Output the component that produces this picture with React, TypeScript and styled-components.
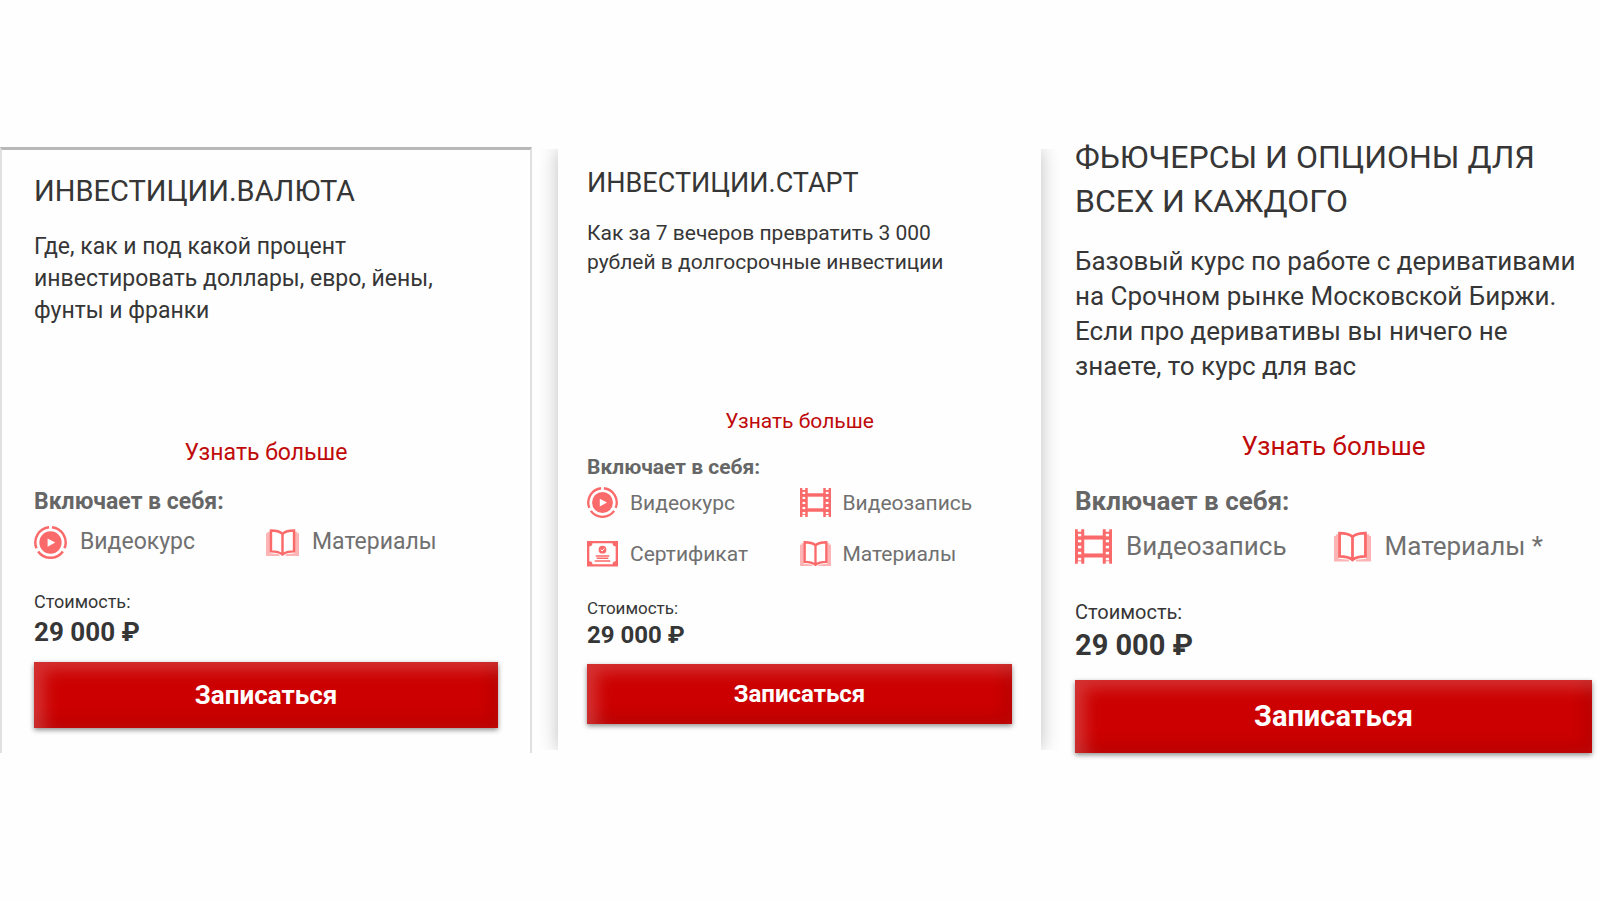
import React from 'react';
import styled, { createGlobalStyle, css, ThemeProvider } from 'styled-components';

type TextStyle = { size: number; line: number; top: number };

interface CardScale {
  title: TextStyle;
  text: TextStyle & { height: number };
  more: TextStyle;
  heading: TextStyle;
  items: TextStyle & { icon: number; gap: number; rowGap: number };
  label: TextStyle;
  price: TextStyle;
  button: TextStyle;
}

const medium: CardScale = {
  title: { size: 29, line: 40, top: 21 },
  text: { size: 23, line: 32, top: 20, height: 206 },
  more: { size: 23, line: 32, top: 0 },
  heading: { size: 23, line: 32, top: 17 },
  items: { size: 23, line: 34, top: 7, icon: 33, gap: 13, rowGap: 22 },
  label: { size: 18, line: 24, top: 31 },
  price: { size: 26, line: 32, top: 2 },
  button: { size: 26, line: 66, top: 14 },
};

const small: CardScale = {
  title: { size: 27, line: 36, top: 16 },
  text: { size: 21, line: 29, top: 18, height: 188 },
  more: { size: 21, line: 28, top: 0 },
  heading: { size: 21, line: 28, top: 18 },
  items: { size: 21, line: 30, top: 6, icon: 31, gap: 12, rowGap: 20 },
  label: { size: 17, line: 22, top: 28 },
  price: { size: 24, line: 28, top: 2 },
  button: { size: 24, line: 60, top: 15 },
};

const large: CardScale = {
  title: { size: 32, line: 44, top: 0 },
  text: { size: 26, line: 35, top: 21, height: 184 },
  more: { size: 26, line: 36, top: 0 },
  heading: { size: 26, line: 36, top: 19 },
  items: { size: 26, line: 38, top: 8, icon: 37, gap: 14, rowGap: 24 },
  label: { size: 20, line: 26, top: 34 },
  price: { size: 29, line: 36, top: 2 },
  button: { size: 29, line: 73, top: 17 },
};

const type = (key: keyof CardScale) => css`
  margin: ${({ theme }) => (theme as CardScale)[key].top}px 0 0;
  font-size: ${({ theme }) => (theme as CardScale)[key].size}px;
  line-height: ${({ theme }) => (theme as CardScale)[key].line}px;
`;

const GlobalStyle = createGlobalStyle`
  *, *::before, *::after { box-sizing: border-box; }
  body {
    margin: 0;
    background: #fefefe;
    color: #363636;
    font-family: Roboto, "Liberation Sans", sans-serif;
  }
`;

const Page = styled.main`
  display: grid;
  grid-template-columns: 558fr 483fr 559fr;
  align-items: start;
  min-height: 100vh;
  padding-top: 135px;
`;

const Card = styled.article<{ $frame: 'outlined' | 'raised' | 'plain' }>`
  display: flex;
  flex-direction: column;

  ${({ $frame }) =>
    $frame === 'outlined' &&
    css`
      margin: 12px 26px 0 0;
      padding: 0 32px 25px;
      border: 2px solid #e0e0e0;
      border-top: 3px solid #b8b8b8;
      border-bottom: 0;
    `}

  ${({ $frame }) =>
    $frame === 'raised' &&
    css`
      margin-top: 14px;
      padding: 0 29px 26px;
      box-shadow: 0 0 18px rgba(0, 0, 0, 0.25);
      clip-path: inset(0 -18px);
    `}

  ${({ $frame }) =>
    $frame === 'plain' &&
    css`
      padding: 0 8px 26px 34px;
    `}
`;

const Title = styled.h2`
  ${type('title')}
  font-weight: 400;
  text-transform: uppercase;
`;

const Description = styled.p`
  ${type('text')}
  min-height: ${({ theme }) => (theme as CardScale).text.height}px;
`;

const MoreLink = styled.a`
  ${type('more')}
  align-self: center;
  color: #c00a0a;
  text-decoration: none;
`;

const Heading = styled.h3`
  ${type('heading')}
  color: #666;
  font-weight: 700;
`;

const Features = styled.ul`
  ${type('items')}
  display: grid;
  grid-template-columns: 1fr 1fr;
  row-gap: ${({ theme }) => (theme as CardScale).items.rowGap}px;
  padding: 0;
  color: #707070;
  list-style: none;
`;

const Feature = styled.li`
  display: flex;
  align-items: center;
  gap: ${({ theme }) => (theme as CardScale).items.gap}px;
  white-space: nowrap;
`;

const Icon = styled.svg`
  flex: none;
  width: ${({ theme }) => (theme as CardScale).items.icon}px;
  height: ${({ theme }) => (theme as CardScale).items.icon}px;
  color: #fb6a6a;
`;

const PriceLabel = styled.p`
  ${type('label')}
`;

const Price = styled.p`
  ${type('price')}
  font-weight: 700;
`;

const EnrollButton = styled.button`
  ${type('button')}
  padding: 0;
  border: 0;
  background: #cc0000;
  box-shadow:
    inset 10px 8px 16px rgba(255, 255, 255, 0.2),
    inset -8px -8px 16px rgba(0, 0, 0, 0.09),
    0 2px 5px rgba(0, 0, 0, 0.45);
  color: #fff;
  font-family: inherit;
  font-weight: 700;
  cursor: pointer;
`;

const VideoCourseIcon = () => (
  <Icon viewBox="0 0 32 32" aria-hidden="true">
    <g fill="none" stroke="currentColor" strokeWidth="2.400">
      <path d="M17.400 1.300A14.800 14.800 0 0 1 29.600 21.600" />
      <path d="M14.600 1.300A14.800 14.800 0 0 0 2.400 21.600" />
      <path d="M4 24.700A14.800 14.800 0 0 0 28 24.700" />
    </g>
    <path
      fill="currentColor"
      fillRule="evenodd"
      d="M16 5.200a10.800 10.800 0 1 0 0 21.600a10.800 10.800 0 1 0 0-21.600zM13.200 12L20.600 16l-7.400 4z"
    />
  </Icon>
);

const FILM_HOLES = [5, 10.2, 15.4, 20.6, 25.8];

const VideoRecordIcon = () => (
  <Icon viewBox="0 0 32 32" aria-hidden="true">
    <path
      fill="currentColor"
      d="M0 1h2.400v2.200h3V1h2.600v5.500h16V1h2.600v2.200h3V1H32v30h-2.400v-2.200h-3V31H24v-5.500H8V31H5.400v-2.200h-3V31H0z"
    />
    <path fill="#fefefe" d="M8 10h16v12H8z" />
    {FILM_HOLES.map((y) => (
      <g key={y} fill="#fefefe">
        <rect x="2.600" y={y} width="2.800" height="2.200" />
        <rect x="26.600" y={y} width="2.800" height="2.200" />
      </g>
    ))}
  </Icon>
);

const CertificateIcon = () => (
  <Icon viewBox="0 0 32 32" aria-hidden="true">
    <path
      fill="currentColor"
      fillRule="evenodd"
      d="M0 3h32v26.500H0zM5.600 5.400A3.200 3.200 0 0 1 2.400 8.600v15.300A3.200 3.200 0 0 1 5.600 27.100h20.800A3.200 3.200 0 0 1 29.600 23.900V8.600A3.200 3.200 0 0 1 26.400 5.400z"
    />
    <circle cx="16" cy="12" r="4" fill="currentColor" />
    <path d="M14.200 12l1.400 1.400 2.400-2.600" fill="none" stroke="#fefefe" />
    <path d="M9 18.500h14M10 21h12M8 23.700h16" stroke="currentColor" strokeWidth="1.500" />
  </Icon>
);

const MaterialsIcon = () => (
  <Icon viewBox="0 0 32 32" aria-hidden="true">
    <path
      fill="currentColor"
      fillOpacity="0.5"
      d="M0 7h1.600V5.500H4V26.500l9 1V29H0zM32 7h-1.600V5.500H28V26.500l-9 1V29H32z"
    />
    <path
      fill="none"
      stroke="currentColor"
      strokeWidth="2.400"
      d="M16 7.500C13 5 9 4.400 4.800 4.400v20.200c4.200 0 8.200.6 11.200 3c3-2.400 7-3 11.200-3V4.400C23 4.400 19 5 16 7.500zV28"
    />
  </Icon>
);

const FEATURES = {
  course: { label: 'Видеокурс', Glyph: VideoCourseIcon },
  record: { label: 'Видеозапись', Glyph: VideoRecordIcon },
  certificate: { label: 'Сертификат', Glyph: CertificateIcon },
  materials: { label: 'Материалы', Glyph: MaterialsIcon },
  materialsNote: { label: 'Материалы *', Glyph: MaterialsIcon },
};

interface Course {
  title: string;
  lines: string[];
  features: (keyof typeof FEATURES)[];
  frame: 'outlined' | 'raised' | 'plain';
  scale: CardScale;
}

const COURSES: Course[] = [
  {
    title: 'Инвестиции.Валюта',
    lines: ['Где, как и под какой процент', 'инвестировать доллары, евро, йены,', 'фунты и франки'],
    features: ['course', 'materials'],
    frame: 'outlined',
    scale: medium,
  },
  {
    title: 'Инвестиции.Старт',
    lines: ['Как за 7 вечеров превратить 3 000', 'рублей в долгосрочные инвестиции'],
    features: ['course', 'record', 'certificate', 'materials'],
    frame: 'raised',
    scale: small,
  },
  {
    title: 'Фьючерсы и опционы для всех и каждого',
    lines: [
      'Базовый курс по работе с деривативами',
      'на Срочном рынке Московской Биржи.',
      'Если про деривативы вы ничего не',
      'знаете, то курс для вас',
    ],
    features: ['record', 'materialsNote'],
    frame: 'plain',
    scale: large,
  },
];

const CourseCard = ({ course }: { course: Course }) => (
  <ThemeProvider theme={course.scale}>
    <Card $frame={course.frame}>
      <Title>{course.title}</Title>
      <Description>
        {course.lines.map((line, i) => (
          <React.Fragment key={line}>
            {i > 0 && <br />}
            {line}
          </React.Fragment>
        ))}
      </Description>
      <MoreLink href="#more">Узнать больше</MoreLink>
      <Heading>Включает в себя:</Heading>
      <Features>
        {course.features.map((key) => {
          const { label, Glyph } = FEATURES[key];
          return (
            <Feature key={key}>
              <Glyph />
              {label}
            </Feature>
          );
        })}
      </Features>
      <PriceLabel>Стоимость:</PriceLabel>
      <Price>29 000 ₽</Price>
      <EnrollButton type="button">Записаться</EnrollButton>
    </Card>
  </ThemeProvider>
);

export default function App() {
  return (
    <>
      <GlobalStyle />
      <Page>
        {COURSES.map((course) => (
          <CourseCard key={course.title} course={course} />
        ))}
      </Page>
    </>
  );
}
